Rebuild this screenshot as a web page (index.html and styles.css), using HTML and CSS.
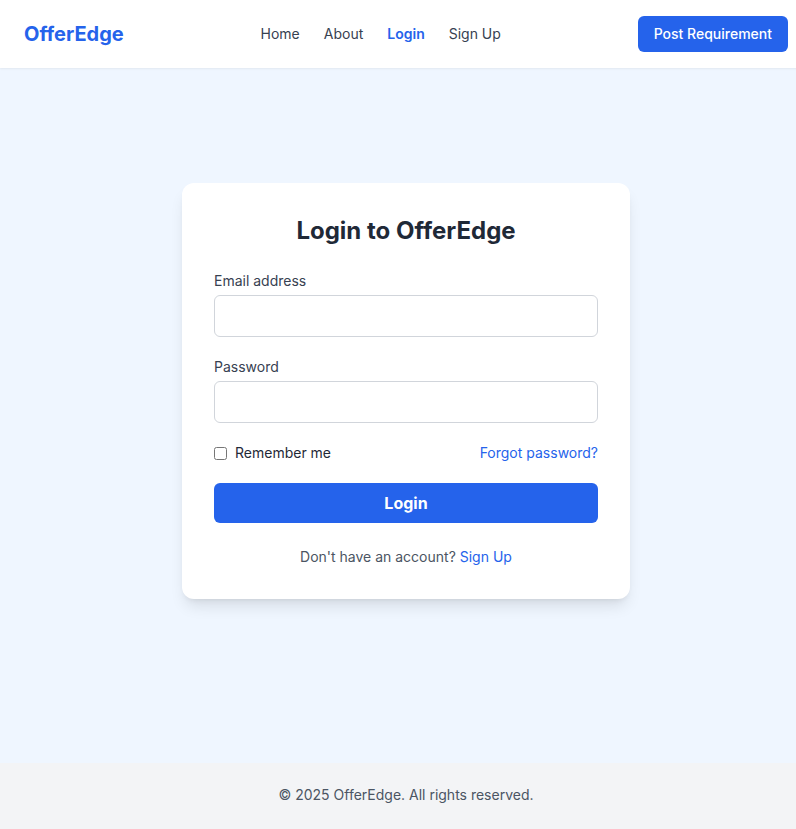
FILE: index.html
```html
<!DOCTYPE html>
<html lang="en">
<head>
<meta charset="utf-8">
<title>Login - OfferEdge</title>
<link rel="stylesheet" href="styles.css">
</head>
<body>
<header class="header">
  <a class="logo" href="#">OfferEdge</a>
  <nav class="nav">
    <a href="#" class="nav-link">Home</a>
    <a href="#" class="nav-link">About</a>
    <a href="#" class="nav-link active">Login</a>
    <a href="#" class="nav-link">Sign Up</a>
  </nav>
  <a href="#" class="post-btn">Post Requirement</a>
</header>
<main class="main">
  <div class="card">
    <h1 class="title">Login to OfferEdge</h1>
    <form class="form">
      <div class="field">
        <label class="label" for="email">Email address</label>
        <input class="input" id="email" type="email">
      </div>
      <div class="field">
        <label class="label" for="password">Password</label>
        <input class="input" id="password" type="password">
      </div>
      <div class="row">
        <label class="remember"><input type="checkbox" class="checkbox"><span>Remember me</span></label>
        <a href="#" class="link">Forgot password?</a>
      </div>
      <button type="button" class="submit">Login</button>
    </form>
    <p class="signup">Don't have an account? <a href="#" class="link">Sign Up</a></p>
  </div>
</main>
<footer class="footer">© 2025 OfferEdge. All rights reserved.</footer>
</body>
</html>
```
FILE: styles.css
```css
* { box-sizing: border-box; }
html { overflow-x: hidden; }
html, body { margin: 0; padding: 0; }
body {
  font-family: Inter, "Noto Sans", sans-serif;
  width: 812px;
  min-height: 100vh;
  display: flex;
  flex-direction: column;
  background: #eff6ff;
  color: #1f2937;
}
a { text-decoration: none; }
.header {
  height: 68px;
  background: #fff;
  display: flex;
  align-items: center;
  justify-content: space-between;
  padding: 0 24px;
  box-shadow: 0 1px 2px rgba(0,0,0,0.06);
  position: relative;
  z-index: 1;
}
.logo {
  font-size: 20px;
  font-weight: 700;
  color: #2563eb;
  line-height: 28px;
}
.nav { display: flex; gap: 24px; }
.nav-link {
  font-size: 14px;
  color: #374151;
  line-height: 20px;
}
.nav-link.active { color: #2563eb; font-weight: 600; }
.post-btn {
  background: #2563eb;
  color: #fff;
  font-size: 14px;
  font-weight: 500;
  line-height: 20px;
  padding: 8px 16px;
  border-radius: 6px;
}
.main {
  flex: 1;
  display: flex;
  justify-content: center;
  align-items: flex-start;
  padding-top: 115px;
}
.card {
  width: 448px;
  background: #fff;
  border-radius: 12px;
  padding: 32px;
  box-shadow: 0 10px 15px -3px rgba(0,0,0,0.1), 0 4px 6px -4px rgba(0,0,0,0.1);
}
.title {
  margin: 0 0 24px;
  font-size: 24px;
  line-height: 32px;
  font-weight: 700;
  text-align: center;
  color: #1f2937;
}
.form { display: flex; flex-direction: column; gap: 20px; margin: 0; }
.field { display: flex; flex-direction: column; gap: 4px; }
.label { font-size: 14px; line-height: 20px; color: #374151; }
.input {
  height: 42px;
  border: 1px solid #d1d5db;
  border-radius: 6px;
  padding: 8px 12px;
  font-size: 16px;
  font-family: inherit;
  background: #fff;
}
.row {
  display: flex;
  justify-content: space-between;
  align-items: center;
  font-size: 14px;
  line-height: 20px;
}
.remember { display: flex; align-items: center; color: #1f2937; }
.checkbox { width: 13px; height: 13px; margin: 0 8px 0 0; }
.link { color: #2563eb; }
.submit {
  height: 40px;
  border: 0;
  border-radius: 6px;
  background: #2563eb;
  color: #fff;
  font-family: inherit;
  font-size: 16px;
  font-weight: 700;
}
.signup {
  margin: 24px 0 0;
  text-align: center;
  font-size: 14px;
  line-height: 20px;
  color: #4b5563;
}
.footer {
  background: #f3f4f6;
  text-align: center;
  font-size: 14px;
  line-height: 20px;
  color: #4b5563;
  padding: 22px 0 24px;
}
```
